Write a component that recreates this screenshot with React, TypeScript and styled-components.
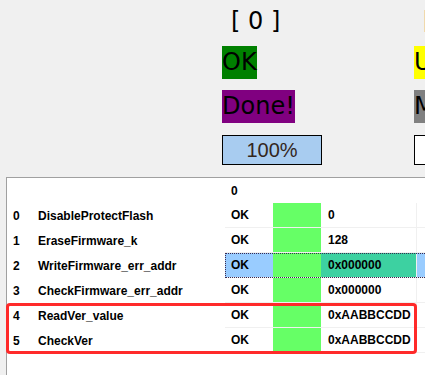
import React from "react";
import styled, { createGlobalStyle } from "styled-components";

const GlobalStyle = createGlobalStyle`
  html, body {
    margin: 0;
    padding: 0;
    background: #f0f0f0;
    overflow: hidden;
  }
`;

const Page = styled.div`
  width: 425px;
  height: 375px;
  overflow: hidden;
  background: #f0f0f0;
  font-family: "Liberation Sans", Arial, sans-serif;
`;

const TopArea = styled.div`
  display: flex;
  height: 177px;
  padding-left: 222px;
  box-sizing: border-box;
`;

const Column = styled.div`
  width: 192px;
  flex-shrink: 0;
  display: flex;
  flex-direction: column;
  align-items: flex-start;
`;

const IndexLabel = styled.div<{ $color: string }>`
  height: 46px;
  box-sizing: border-box;
  padding: 7px 0 0 9px;
  font-family: "DejaVu Sans", sans-serif;
  font-size: 24px;
  line-height: 28px;
  color: ${(p) => p.$color};
  white-space: pre;
`;

const StatusBox = styled.div<{ $bg: string }>`
  height: 33px;
  line-height: 33px;
  margin-bottom: ${(p) => (p.$bg ? "11px" : "0")};
  font-family: "DejaVu Sans", sans-serif;
  font-size: 24px;
  color: #000;
  background: ${(p) => p.$bg};
  white-space: nowrap;
`;

const Progress = styled.div`
  position: relative;
  margin-top: 1px;
  width: 100px;
  height: 30px;
  box-sizing: border-box;
  border: 1px solid #000;
  background: #fff;
  overflow: hidden;
`;

const ProgressFill = styled.div`
  position: absolute;
  left: 0;
  top: 0;
  bottom: 0;
  background: #a8ccf0;
`;

const ProgressText = styled.div`
  position: relative;
  height: 100%;
  display: flex;
  align-items: center;
  justify-content: center;
  font-family: "Liberation Sans", Arial, sans-serif;
  font-size: 20px;
  color: #33261c;
`;

const Panel = styled.div`
  position: relative;
  margin-left: 6px;
  width: 470px;
  height: 220px;
  border: 1px solid #a0a0a0;
  background: #fff;
  font-family: "Liberation Sans", Arial, sans-serif;
  font-size: 12px;
  font-weight: bold;
  color: #000;
`;

const Row = styled.div<{ $selected?: boolean }>`
  display: grid;
  grid-template-columns: 31px 187px 48px 48px 96px 1fr;
  height: 25px;
  position: relative;
  ${(p) =>
    p.$selected
      ? `&::after {
    content: "";
    position: absolute;
    left: 218px;
    right: 0;
    top: 0;
    bottom: 0;
    border: 1px dotted #3a2a50;
    pointer-events: none;
  }`
      : ""}
`;

const PlainCell = styled.div<{ $pad?: number }>`
  display: flex;
  align-items: center;
  padding-left: ${(p) => p.$pad ?? 0}px;
  white-space: nowrap;
`;

const GridCell = styled.div<{ $bg?: string; $pad?: number; $rightLine?: boolean; $line?: boolean }>`
  display: flex;
  align-items: center;
  padding-left: ${(p) => p.$pad ?? 0}px;
  background: ${(p) => p.$bg ?? "transparent"};
  border-bottom: ${(p) => (p.$line ? "1px solid #f0f0f0" : "none")};
  border-right: ${(p) => (p.$rightLine ? "1px solid #f0f0f0" : "none")};
  white-space: nowrap;
  box-sizing: border-box;
`;

const Highlight = styled.div`
  position: absolute;
  left: -1px;
  top: 125px;
  width: 411px;
  height: 51px;
  box-sizing: border-box;
  border: 3px solid #ff2a2a;
  border-radius: 4px;
  pointer-events: none;
`;

type Step = { name: string; status: string; value: string };

const steps: Step[] = [
  { name: "DisableProtectFlash", status: "OK", value: "0" },
  { name: "EraseFirmware_k", status: "OK", value: "128" },
  { name: "WriteFirmware_err_addr", status: "OK", value: "0x000000" },
  { name: "CheckFirmware_err_addr", status: "OK", value: "0x000000" },
  { name: "ReadVer_value", status: "OK", value: "0xAABBCCDD" },
  { name: "CheckVer", status: "OK", value: "0xAABBCCDD" },
];

const channels = [
  { label: "[ 0 ]", labelColor: "#000", status: "OK", statusBg: "#008000", result: "Done!", resultBg: "#800080", pct: 100 },
  { label: "[ 1 ]", labelColor: "#800000", status: "Unknown", statusBg: "#ffff00", result: "Msg", resultBg: "#808080", pct: 0 },
];

const SELECTED = 2;

export default function App() {
  return (
    <Page>
      <GlobalStyle />
      <TopArea>
        {channels.map((c) => (
          <Column key={c.label}>
            <IndexLabel $color={c.labelColor}>{c.label}</IndexLabel>
            <StatusBox $bg={c.statusBg}>{c.status}</StatusBox>
            <StatusBox $bg={c.resultBg}>{c.result}</StatusBox>
            <Progress>
              <ProgressFill style={{ width: `${c.pct}%` }} />
              {c.pct > 0 && <ProgressText>{c.pct}%</ProgressText>}
            </Progress>
          </Column>
        ))}
      </TopArea>
      <Panel>
        <Row>
          <PlainCell />
          <PlainCell />
          <PlainCell $pad={6}>0</PlainCell>
          <PlainCell />
          <PlainCell />
          <PlainCell />
        </Row>
        {steps.map((s, i) => {
          const sel = i === SELECTED;
          return (
            <Row key={s.name} $selected={sel}>
              <PlainCell $pad={6}>{i}</PlainCell>
              <PlainCell>{s.name}</PlainCell>
              <GridCell $pad={6} $line $bg={sel ? "#99ccff" : undefined}>
                {s.status}
              </GridCell>
              <GridCell $line $bg="#66ff66" />
              <GridCell $pad={7} $line $rightLine $bg={sel ? "#3dd1a1" : undefined}>
                {s.value}
              </GridCell>
              <GridCell $line $bg={sel ? "#99ccff" : undefined} />
            </Row>
          );
        })}
        <Highlight />
      </Panel>
    </Page>
  );
}
